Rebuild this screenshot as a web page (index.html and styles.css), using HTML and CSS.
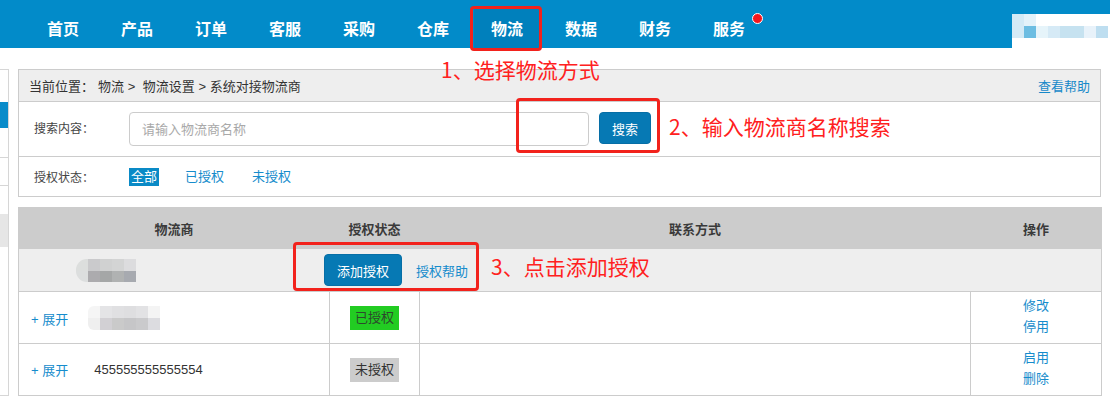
FILE: index.html
```html
<!DOCTYPE html>
<html lang="zh-CN">
<head>
<meta charset="utf-8">
<title>系统对接物流商</title>
<link rel="stylesheet" href="styles.css">
</head>
<body>
<header class="topnav">
  <ul class="menu">
    <li class="menu-item"><a href="#">首页</a></li>
    <li class="menu-item"><a href="#">产品</a></li>
    <li class="menu-item"><a href="#">订单</a></li>
    <li class="menu-item"><a href="#">客服</a></li>
    <li class="menu-item"><a href="#">采购</a></li>
    <li class="menu-item"><a href="#">仓库</a></li>
    <li class="menu-item active"><a href="#">物流</a></li>
    <li class="menu-item"><a href="#">数据</a></li>
    <li class="menu-item"><a href="#">财务</a></li>
    <li class="menu-item"><a href="#">服务</a><span class="dot"></span></li>
  </ul>
  <div class="user-blur"></div>
</header>

<div class="page">
  <aside class="side">
    <div class="side-item first"></div>
    <div class="side-item current"></div>
    <div class="side-item lined tall"></div>
    <div class="side-item lined"></div>
    <div class="side-item"></div>
    <div class="side-item muted"></div>
  </aside>

  <main class="content">
    <section class="panel">
      <div class="crumb">
        <div class="crumb-path"><span>当前位置：</span><a href="#">物流</a> &gt; <a href="#">物流设置</a> &gt; <span>系统对接物流商</span></div>
        <a class="help" href="#">查看帮助</a>
      </div>
      <div class="search-row">
        <label class="field-label">搜索内容：</label>
        <input class="search-input" type="text" placeholder="请输入物流商名称">
        <button class="btn btn-search" type="button">搜索</button>
      </div>
      <div class="status-row">
        <span class="field-label">授权状态：</span>
        <a class="chip on" href="#">全部</a>
        <a class="chip" href="#">已授权</a>
        <a class="chip" href="#">未授权</a>
      </div>
    </section>

    <table class="grid">
      <colgroup><col class="c1"><col class="c2"><col class="c3"><col class="c4"></colgroup>
      <thead>
        <tr><th>物流商</th><th>授权状态</th><th>联系方式</th><th>操作</th></tr>
      </thead>
      <tbody>
        <tr class="group">
          <td colspan="4">
            <div class="group-cell">
              <span class="blur blur-a"></span>
              <button class="btn btn-add" type="button">添加授权</button>
              <a class="link help-auth" href="#">授权帮助</a>
            </div>
          </td>
        </tr>
        <tr class="row">
          <td class="name-cell"><a class="link expand" href="#">+ 展开</a><span class="blur blur-b"></span></td>
          <td class="center"><span class="tag ok">已授权</span></td>
          <td></td>
          <td class="ops"><a class="link" href="#">修改</a><a class="link" href="#">停用</a></td>
        </tr>
        <tr class="row">
          <td class="name-cell"><a class="link expand" href="#">+ 展开</a><span class="name">455555555555554</span></td>
          <td class="center"><span class="tag no">未授权</span></td>
          <td></td>
          <td class="ops"><a class="link" href="#">启用</a><a class="link" href="#">删除</a></td>
        </tr>
      </tbody>
    </table>
  </main>
</div>

<div class="mark mark-nav"></div>
<div class="mark mark-search"></div>
<div class="mark mark-add"></div>
<p class="note note-1">1、选择物流方式</p>
<p class="note note-2">2、输入物流商名称搜索</p>
<p class="note note-3">3、点击添加授权</p>
</body>
</html>
```

FILE: styles.css
```css
* { box-sizing: border-box; }
html, body { margin: 0; padding: 0; }
body {
  position: relative;
  width: 1110px;
  height: 405px;
  overflow: hidden;
  background: #fff;
  color: #333;
  font-family: "Liberation Sans", "Noto Sans CJK SC", sans-serif;
  font-size: 12px;
}
a { text-decoration: none; }

/* top navigation */
.topnav {
  display: flex;
  height: 48px;
  background: #028bc9;
}
.menu {
  display: flex;
  margin: 0;
  padding: 0 0 0 26px;
  list-style: none;
}
.menu-item {
  position: relative;
  width: 74px;
  height: 48px;
  padding: 9px 4px 0;
}
.menu-item a {
  display: block;
  height: 39px;
  line-height: 39px;
  text-align: center;
  color: #fff;
  font-family: "Noto Sans CJK SC", sans-serif;
  font-size: 16px;
  font-weight: bold;
}
.menu-item.active a { background: #0080bc; }
.dot {
  position: absolute;
  left: 60px;
  top: 13px;
  width: 11px;
  height: 11px;
  border-radius: 50%;
  background: #f5161c;
  border: 1px solid #fff;
}
.user-blur {
  margin-left: auto;
  align-self: flex-end;
  width: 98px;
  height: 34px;
  background:
    linear-gradient(to right, #d3eaf6 0 12px, #e3f2fa 12px 24px, #fff 24px) 0 0 / 100% 12px no-repeat,
    linear-gradient(to right, #d3eaf6 0 12px, #6cbde2 12px 24px, #e6f4fa 24px 36px, #d6eaf6 36px 48px, #c6e2f0 48px 72px, #e8f2fa 72px 84px, #bedef0 84px 96px, #fff 96px) 0 12px / 100% 12px no-repeat,
    #fff;
}

/* page */
.page { display: flex; }
.side {
  width: 9px;
  margin-top: 21px;
  border-top: 1px solid #d6d6d6;
  border-right: 1px solid #d6d6d6;
  border-bottom: 1px solid #d6d6d6;
}
.side-item { height: 28px; }
.side-item.first { height: 32px; }
.side-item.current { height: 26px; background: #0a8cca; }
.side-item.lined { border-bottom: 1px solid #d6d6d6; }
.side-item.tall { height: 30px; }
.side-item.muted { height: 33px; background: #e6e6e6; }

.content {
  width: 1083px;
  margin-left: 9px;
  padding-top: 21px;
}

/* filter panel */
.panel { border: 1px solid #ccc; }
.crumb {
  display: flex;
  align-items: center;
  justify-content: space-between;
  height: 32px;
  padding: 0 10px 0 10px;
  background: #eee;
  border-bottom: 1px solid #ccc;
  font-size: 13px;
}
.crumb-path { color: #333; white-space: nowrap; }
.crumb-path a { color: #333; margin-left: 4px; }
.help { color: #1789c9; }

.search-row {
  display: flex;
  align-items: flex-start;
  height: 55px;
  padding: 10px 0 0 15px;
  border-bottom: 1px solid #ccc;
}
.field-label {
  width: 95px;
  flex: none;
  color: #444;
  font-size: 12px;
}
.search-row .field-label { line-height: 34px; }
.search-input {
  width: 460px;
  height: 34px;
  margin: 0;
  padding: 0 12px;
  border: 1px solid #ccc;
  border-radius: 4px;
  font: inherit;
  font-size: 13px;
  color: #333;
  outline: none;
}
.search-input::placeholder { color: #a9a9a9; }

.btn {
  margin: 0;
  padding: 0;
  border: 1px solid #066ea6;
  border-radius: 4px;
  background: #0679b4;
  color: #fff;
  font: inherit;
  font-size: 13px;
  cursor: pointer;
}
.btn-search { width: 52px; height: 32px; margin-left: 10px; }

.status-row {
  display: flex;
  align-items: center;
  height: 39px;
  padding-left: 15px;
}
.chip {
  padding: 0 2px;
  margin-right: 24px;
  line-height: 18px;
  font-size: 13px;
  color: #168ccc;
}
.chip.on { background: #0a8ac6; color: #fff; }

/* table */
.grid {
  width: 1083px;
  margin-top: 10px;
  border-collapse: collapse;
  table-layout: fixed;
  font-size: 13px;
}
.c1 { width: 311px; }
.c2 { width: 90px; }
.c3 { width: 551px; }
.c4 { width: 131px; }
.grid th {
  height: 41px;
  padding: 0;
  background: #ccc;
  border: 1px solid #ccc;
  color: #3a3a3a;
  font-weight: bold;
  text-align: center;
}
.grid td {
  padding: 0;
  border: 1px solid #ccc;
}
.group td { height: 43px; background: #eee; padding-left: 57px; }
.group-cell { display: flex; align-items: center; }
.btn-add { width: 78px; height: 32px; margin-left: 188px; }
.help-auth { margin-left: 14px; }
.link { color: #168ccc; }

.row td { height: 52px; }
.name-cell { padding-left: 12px !important; white-space: nowrap; }
.name-cell .expand,
.name-cell .name,
.name-cell .blur { vertical-align: middle; }
.name { margin-left: 26px; color: #333; }
.center { text-align: center; }
.tag {
  display: inline-block;
  padding: 0 5px;
  line-height: 24px;
  color: #333;
}
.tag.ok { background: #22cc22; color: #2c4a2c; }
.tag.no { background: #ccc; }
.grid td.ops { text-align: center; padding-bottom: 3px; }
.ops a { display: block; line-height: 21px; }

/* pixelated placeholders */
.blur { display: inline-block; }
.blur-a {
  width: 60px;
  height: 23px;
  border-radius: 11px 0 0 11px;
  background:
    linear-gradient(to right, #dcdedd 0 12px, #cacacc 12px 24px, #d0d1d1 24px 36px, #d3d4d4 36px 48px, #dcdcde 48px 60px) 0 0 / 100% 12px no-repeat,
    linear-gradient(to right, #dcdede 0 12px, #acabae 12px 24px, #a5a7a7 24px 36px, #b0b2b2 36px 48px, #a7aab0 48px 60px) 0 12px / 100% 11px no-repeat;
}
.blur-b {
  width: 72px;
  height: 24px;
  margin-left: 20px;
  border-radius: 6px 0 0 6px;
  background:
    linear-gradient(to right, #f5f5f5 0 12px, #e4e4e6 12px 24px, #e0e0e2 24px 36px, #dedee0 36px 48px, #e2e2e4 48px 60px, #f4f4f4 60px 72px) 0 0 / 100% 12px no-repeat,
    linear-gradient(to right, #efefef 0 12px, #d2d0d4 12px 24px, #cacaca 24px 36px, #c6c6c8 36px 48px, #cacacc 48px 60px, #dcdce0 60px 72px) 0 12px / 100% 12px no-repeat;
}

/* tutorial annotations laid over the page */
.mark {
  position: absolute;
  border: 3px solid #f2221c;
  border-radius: 4px;
}
.mark-nav { left: 470px; top: 6px; width: 72px; height: 45px; }
.mark-search { left: 516px; top: 98px; width: 144px; height: 55px; }
.mark-add { left: 293px; top: 242px; width: 186px; height: 49px; }
.note {
  position: absolute;
  margin: 0;
  font-family: "Noto Sans CJK SC", sans-serif;
  font-size: 21px;
  line-height: 21px;
  color: #ff2020;
  white-space: nowrap;
}
.note-1 { left: 441px; top: 59px; }
.note-2 { left: 669px; top: 116px; }
.note-3 { left: 491px; top: 256px; }
```
